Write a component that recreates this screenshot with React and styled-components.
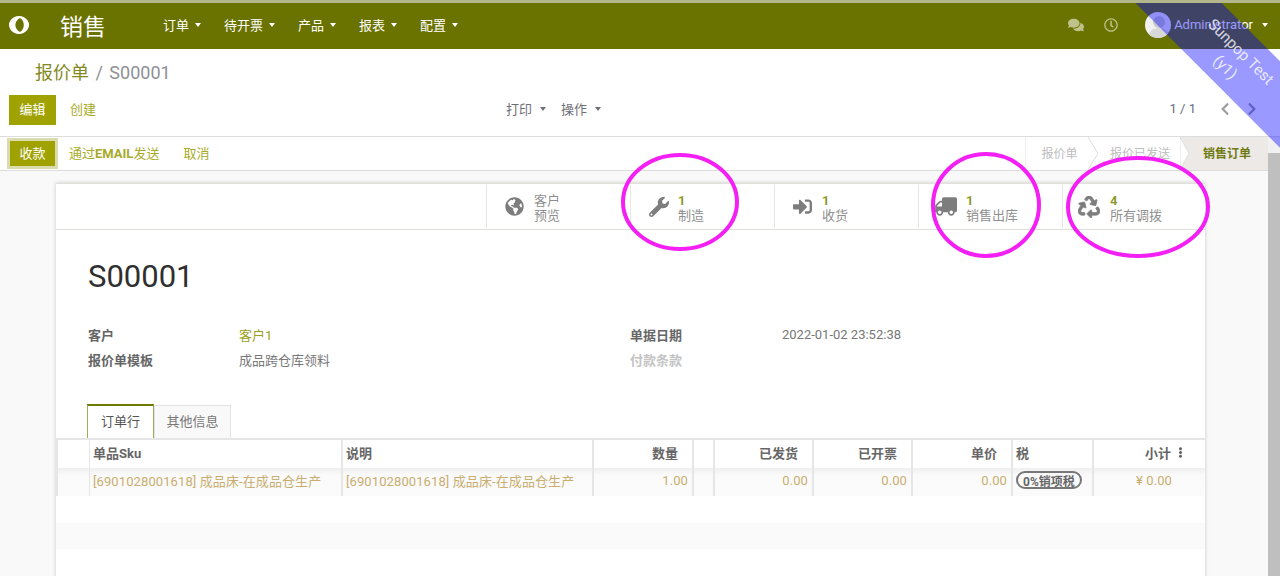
import styled, { createGlobalStyle } from "styled-components";
import {
  FaComments,
  FaEllipsisV,
  FaGlobeAmericas,
  FaRecycle,
  FaSignInAlt,
  FaTruck,
  FaWrench,
  FaRegClock,
  FaChevronLeft,
  FaChevronRight,
} from "react-icons/fa";

const GlobalStyle = createGlobalStyle`
  html, body {
    margin: 0;
    padding: 0;
    background: #fff;
  }
  body {
    font-family: Roboto, "Noto Sans CJK SC", sans-serif;
    font-size: 13px;
    color: #666;
  }
  * {
    box-sizing: border-box;
  }
`;

const Page = styled.div`
  position: relative;
  width: 1280px;
  height: 576px;
  overflow: hidden;
  border-top: 3px solid #b4b78c;
  display: flex;
  flex-direction: column;
`;

/* top bar */
const Navbar = styled.div`
  height: 46px;
  flex: none;
  background: #6a7200;
  color: #fff;
  display: flex;
  align-items: center;
  padding: 0 12px 3px 9px;
`;

const Logo = styled.svg`
  width: 20px;
  height: 18px;
  flex: none;
  margin-right: 31px;
`;

const AppName = styled.div`
  font-size: 23px;
  width: 103px;
  flex: none;
`;

const Menu = styled.div`
  display: flex;
  gap: 23px;
  flex: 1;
`;

const MenuItem = styled.div`
  display: flex;
  align-items: center;
  gap: 4px;
  font-size: 13px;
`;

const Caret = styled.span`
  display: inline-block;
  width: 0;
  height: 0;
  margin-left: 2px;
  border-left: 3.5px solid transparent;
  border-right: 3.5px solid transparent;
  border-top: 4px solid currentColor;
`;

const NavIcon = styled.span`
  display: flex;
  color: #bfc38a;
  font-size: ${({ size }) => size}px;
  margin-right: ${({ gap }) => gap}px;
`;

const UserName = styled.span`
  font-size: 13px;
  margin: 0 7px 0 3px;
`;

const Avatar = styled.svg`
  width: 26px;
  height: 26px;
  border-radius: 50%;
  background: #f1f1f1;
`;

/* breadcrumb and actions */
const ControlPanel = styled.div`
  height: 88px;
  flex: none;
  padding: 11px 9px 0;
  border-bottom: 1px solid #ddd;
`;

const Breadcrumb = styled.div`
  height: 26px;
  padding-left: 26px;
  font-size: 18px;
  line-height: 26px;
  color: #8f8f95;
`;

const CrumbLink = styled.span`
  color: #83891f;
  margin-right: 2px;
`;

const CrumbSlash = styled.span`
  margin-right: 2px;
`;

const ActionsRow = styled.div`
  margin-top: 9px;
  display: grid;
  grid-template-columns: 497px 1fr auto;
  align-items: center;
  height: 30px;
`;

const Group = styled.div`
  display: flex;
  align-items: center;
  gap: ${({ gap }) => gap || 0}px;
`;

const PrimaryButton = styled.div`
  height: 30px;
  width: 47px;
  padding-bottom: 3px;
  background: #9fa200;
  color: #fff;
  display: flex;
  align-items: center;
  justify-content: center;
`;

const LinkText = styled.span`
  color: #a7ab27;
  padding-bottom: 3px;
`;

const MutedMenu = styled.span`
  display: flex;
  align-items: center;
  gap: 6px;
  padding-bottom: 3px;
  color: #6f6f78;
`;

const Pager = styled.div`
  display: flex;
  align-items: center;
  color: #5f6f80;
  padding: 0 12px 3px 0;
`;

const PagerArrow = styled.span`
  display: flex;
  font-size: 14px;
  color: #a09e9c;
  margin-left: ${({ gap }) => gap}px;
`;

/* content under the control panel */
const Main = styled.div`
  flex: 1;
  min-height: 0;
  display: flex;
`;

const Content = styled.div`
  flex: 1;
  min-width: 0;
  display: flex;
  flex-direction: column;
`;

const StatusBar = styled.div`
  height: 34px;
  flex: none;
  display: flex;
  align-items: center;
  justify-content: space-between;
  padding-left: 7px;
  border-bottom: 1px solid #ddd;
`;

const PayButton = styled.div`
  width: 51px;
  height: 31px;
  padding-bottom: 2px;
  background: #9fa200;
  border: 3px solid #dadcae;
  color: #fff;
  display: flex;
  align-items: center;
  justify-content: center;
`;

const ActionLink = styled.span`
  color: #a7ab27;
  margin-left: ${({ gap }) => gap}px;
  padding-bottom: 2px;
`;

const Emphasis = styled.span`
  font-weight: 700;
`;

const Steps = styled.div`
  display: flex;
  height: 33px;
  align-self: flex-start;
`;

const Step = styled.div`
  position: relative;
  width: ${({ width }) => width}px;
  padding: 0 0 2px ${({ indent }) => indent}px;
  display: flex;
  align-items: center;
  justify-content: center;
  font-size: 12px;
  color: ${({ active }) => (active ? "#6f7a10" : "#bdbdbd")};
  font-weight: ${({ active }) => (active ? 700 : 400)};
  background: ${({ active }) => (active ? "#ece9e6" : "#fff")};
  border-left: ${({ first }) => (first ? "1px solid #eee" : "none")};
`;

const StepArrow = styled.svg`
  position: absolute;
  top: 0;
  left: 0;
  width: 10px;
  height: 33px;
`;

const FormArea = styled.div`
  flex: 1;
  min-height: 0;
  background: #f9f9f9;
  padding: 12px 63px 0 56px;
  overflow: hidden;
`;

const Sheet = styled.div`
  background: #fff;
  height: 600px;
  box-shadow: 0 0 4px rgba(0, 0, 0, 0.2);
`;

const ButtonBox = styled.div`
  height: 47px;
  display: flex;
  justify-content: flex-end;
  border-top: 1px solid #e2e0db;
  border-bottom: 1px solid #e2e0db;
`;

const StatButton = styled.div`
  width: ${({ width }) => width || 144}px;
  display: flex;
  align-items: center;
  padding: 3px 0 0 18px;
  border-left: 1px solid #e8e6e1;
  margin: 1px 0;
`;

const StatIcon = styled.span`
  width: ${({ shift }) => 29 + (shift || 0)}px;
  margin-left: ${({ shift }) => -(shift || 0)}px;
  margin-top: -3px;
  flex: none;
  display: flex;
  font-size: ${({ size }) => size || 19}px;
  color: #7d7d7d;

  svg {
    transform: ${({ flip }) => (flip ? "scaleX(-1)" : "none")};
    stroke: currentColor;
    stroke-width: ${({ heavy }) => heavy || 0}px;
  }
`;

const StatText = styled.div`
  line-height: 15px;
  color: #8f8f8f;
`;

const StatValue = styled.div`
  font-weight: 700;
  color: #8c9a2e;
`;

const SheetBody = styled.div`
  padding: 26px 32px 0;
`;

const Title = styled.h1`
  margin: 0;
  font-size: 31px;
  line-height: 42px;
  font-weight: 400;
  color: #2f2f2f;
`;

const FieldGrid = styled.div`
  margin-top: 24px;
  display: grid;
  grid-template-columns: 151px 391px 152px 1fr;
  grid-auto-rows: 25px;
  align-items: center;
`;

const Label = styled.div`
  font-weight: 700;
  color: ${({ muted }) => (muted ? "#c4c4c4" : "#666")};
`;

const Value = styled.div`
  color: ${({ link }) => (link ? "#9aa020" : "#777")};
`;

const Tabs = styled.div`
  margin: 32px 0 0 -1px;
  display: flex;
  align-items: flex-end;
  height: 34px;
`;

const Tab = styled.div`
  height: ${({ active }) => (active ? 34 : 33)}px;
  width: ${({ width }) => width}px;
  padding-bottom: 3px;
  display: flex;
  align-items: center;
  justify-content: center;
  color: ${({ active }) => (active ? "#555" : "#777")};
  background: ${({ active }) => (active ? "#fff" : "#f9f9f9")};
  border: 1px solid ${({ active }) => (active ? "#a4ab50" : "#e2e2e2")};
  border-top: ${({ active }) => (active ? "2px solid #6f7a00" : "1px solid #e2e2e2")};
  border-bottom: none;
`;

const GridRow = styled.div`
  display: grid;
  grid-template-columns: 33px 252px 251px 100px 21px 99px 99px 100px 81px 113px;
  height: ${({ height }) => height}px;
  border-top: ${({ head }) => (head ? "2px solid #e6e6e6" : "none")};
  background: ${({ head }) =>
    head ? "#fff" : "linear-gradient(#efefef, #fafafa 7px, #fbfbfb)"};
`;

const Cell = styled.div`
  display: flex;
  align-items: center;
  justify-content: ${({ right }) => (right ? "flex-end" : "flex-start")};
  gap: 4px;
  padding: 0 ${({ pad }) => pad ?? 4}px 4px 3px;
  border-left: ${({ thin }) => (thin ? 1 : 2)}px solid #e6e6e6;
  white-space: nowrap;
  letter-spacing: ${({ head }) => (head ? 0 : 0.1)}px;
  font-weight: ${({ head }) => (head ? 700 : 400)};
  color: ${({ head }) => (head ? "#666" : "#c9ae70")};
`;

const TaxTag = styled.span`
  height: 18px;
  padding: 0 5px;
  display: flex;
  align-items: center;
  border: 2px solid #777;
  border-radius: 9px;
  font-size: 12px;
  font-weight: 700;
  letter-spacing: 0;
  color: #666;
`;

const Stripe = styled.div`
  height: 26px;
  margin-top: 27px;
  background: #fafafa;
`;

const Scrollbar = styled.div`
  width: 12px;
  flex: none;
  background: #bfbfbf;
  border-top: 16px solid #f1f1f1;
`;

/* test database ribbon and the magenta marks lie over the page */
const RibbonClip = styled.div`
  position: absolute;
  top: 0;
  left: 1000px;
  width: 280px;
  height: 200px;
  overflow: hidden;
  pointer-events: none;
`;

const Ribbon = styled.div`
  position: absolute;
  left: 84px;
  top: 25px;
  width: 300px;
  height: 61px;
  transform: rotate(45deg);
  background: rgba(0, 0, 255, 0.4);
  color: rgba(255, 255, 255, 0.8);
  font-size: 15.4px;
  line-height: 22px;
  text-align: center;
  padding-top: 10px;
`;

const Marks = styled.svg`
  position: absolute;
  left: 0;
  top: -3px;
  width: 1280px;
  height: 576px;
  pointer-events: none;
`;

const menus = ["订单", "待开票", "产品", "报表", "配置"];

const stats = [
  { icon: <FaGlobeAmericas />, lines: ["客户", "预览"] },
  { icon: <FaWrench />, size: 20, value: "1", label: "制造" },
  { icon: <FaSignInAlt />, value: "1", label: "收货" },
  { icon: <FaTruck />, size: 23, shift: 3, flip: true, value: "1", label: "销售出库" },
  { icon: <FaRecycle />, size: 22, shift: 3, heavy: 16, value: "4", label: "所有调拨", width: 143 },
];

const productName = "[6901028001618] 成品床-在成品仓生产";

const App = () => {
  return (
    <Page>
      <GlobalStyle />
      <Navbar>
        <Logo viewBox="0 0 20 18">
          <path
            fill="#fff"
            fillRule="evenodd"
            d="M10 0a10 9 0 1 0 .01 0zM11 2c-2.800 1.600-4.600 4-4.600 7s1.800 5.400 4.600 7c2.400-1.600 3.800-4 3.800-7S13.400 3.600 11 2z"
          />
        </Logo>
        <AppName>销售</AppName>
        <Menu>
          {menus.map((m) => (
            <MenuItem key={m}>
              {m}
              <Caret />
            </MenuItem>
          ))}
        </Menu>
        <NavIcon size={16} gap={20}>
          <FaComments />
        </NavIcon>
        <NavIcon size={14} gap={27}>
          <FaRegClock />
        </NavIcon>
        <Avatar viewBox="0 0 26 26">
          <circle cx="14" cy="10" r="6" fill="#c9c9c9" />
          <path d="M3 26c1-8 6-10 11-10s10 3 11 10z" fill="#d8d8d8" />
        </Avatar>
        <UserName>Administrator</UserName>
        <Caret />
      </Navbar>

      <ControlPanel>
        <Breadcrumb>
          <CrumbLink>报价单</CrumbLink> <CrumbSlash>/</CrumbSlash> S00001
        </Breadcrumb>
        <ActionsRow>
          <Group gap={14}>
            <PrimaryButton>编辑</PrimaryButton>
            <LinkText>创建</LinkText>
          </Group>
          <Group gap={15}>
            <MutedMenu>
              打印 <Caret />
            </MutedMenu>
            <MutedMenu>
              操作 <Caret />
            </MutedMenu>
          </Group>
          <Pager>
            1 / 1
            <PagerArrow gap={22}>
              <FaChevronLeft />
            </PagerArrow>
            <PagerArrow gap={13}>
              <FaChevronRight />
            </PagerArrow>
          </Pager>
        </ActionsRow>
      </ControlPanel>

      <Main>
        <Content>
          <StatusBar>
            <Group>
              <PayButton>收款</PayButton>
              <ActionLink gap={11}>
                通过<Emphasis>EMAIL</Emphasis>发送
              </ActionLink>
              <ActionLink gap={24}>取消</ActionLink>
            </Group>
            <Steps>
              <Step first width={63} indent={5}>
                报价单
              </Step>
              <Step width={92} indent={12}>
                <StepArrow viewBox="0 0 10 33">
                  <path d="M0 0 L10 16.500 L0 33" fill="none" stroke="#ddd" />
                </StepArrow>
                报价已发送
              </Step>
              <Step active width={88} indent={6}>
                <StepArrow viewBox="0 0 10 33">
                  <path d="M0 0 L9 16.500 L0 33z" fill="#fff" stroke="#ddd" />
                </StepArrow>
                销售订单
              </Step>
            </Steps>
          </StatusBar>

          <FormArea>
            <Sheet>
              <ButtonBox>
                {stats.map((s) => (
                  <StatButton key={s.label || "web"} width={s.width}>
                    <StatIcon size={s.size} shift={s.shift} flip={s.flip} heavy={s.heavy}>
                      {s.icon}
                    </StatIcon>
                    {s.lines ? (
                      <StatText>
                        {s.lines[0]}
                        <br />
                        {s.lines[1]}
                      </StatText>
                    ) : (
                      <StatText>
                        <StatValue>{s.value}</StatValue>
                        {s.label}
                      </StatText>
                    )}
                  </StatButton>
                ))}
              </ButtonBox>

              <SheetBody>
                <Title>S00001</Title>
                <FieldGrid>
                  <Label>客户</Label>
                  <Value link>客户1</Value>
                  <Label>单据日期</Label>
                  <Value>2022-01-02 23:52:38</Value>
                  <Label>报价单模板</Label>
                  <Value>成品跨仓库领料</Value>
                  <Label muted>付款条款</Label>
                  <Value />
                </FieldGrid>
                <Tabs>
                  <Tab active width={67}>
                    订单行
                  </Tab>
                  <Tab width={77}>其他信息</Tab>
                </Tabs>
              </SheetBody>

              <GridRow head height={30}>
                <Cell head />
                <Cell head thin>单品Sku</Cell>
                <Cell head>说明</Cell>
                <Cell head right pad={14}>数量</Cell>
                <Cell head />
                <Cell head right pad={14}>已发货</Cell>
                <Cell head right pad={14}>已开票</Cell>
                <Cell head right pad={14}>单价</Cell>
                <Cell head>税</Cell>
                <Cell head right pad={19}>
                  小计 <FaEllipsisV size={11} />
                </Cell>
              </GridRow>
              <GridRow height={28}>
                <Cell />
                <Cell thin>{productName}</Cell>
                <Cell>{productName}</Cell>
                <Cell right>1.00</Cell>
                <Cell />
                <Cell right>0.00</Cell>
                <Cell right>0.00</Cell>
                <Cell right>0.00</Cell>
                <Cell>
                  <TaxTag>0%销项税</TaxTag>
                </Cell>
                <Cell right pad={33}>¥ 0.00</Cell>
              </GridRow>
              <Stripe />
            </Sheet>
          </FormArea>
        </Content>
        <Scrollbar />
      </Main>

      <RibbonClip>
        <Ribbon>
          Sunpop Test
          <br />
          (y1)
        </Ribbon>
      </RibbonClip>

      <Marks viewBox="0 0 1280 576">
        <g fill="none" stroke="#f41ff4" strokeWidth="4">
          <ellipse cx="680" cy="202" rx="57" ry="47" />
          <ellipse cx="986" cy="205" rx="53" ry="51" />
          <ellipse cx="1138" cy="207" rx="70" ry="49" />
        </g>
      </Marks>
    </Page>
  );
};

export default App;
